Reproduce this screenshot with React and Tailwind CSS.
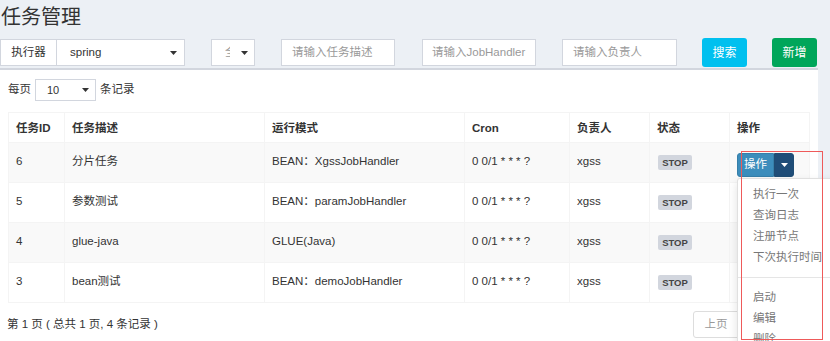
import React from "react";

const rows = [
  { id: 6, desc: "分片任务", mode: "BEAN：XgssJobHandler" },
  { id: 5, desc: "参数测试", mode: "BEAN：paramJobHandler" },
  { id: 4, desc: "glue-java", mode: "GLUE(Java)" },
  { id: 3, desc: "bean测试", mode: "BEAN：demoJobHandler" },
];

const menuTop = ["执行一次", "查询日志", "注册节点", "下次执行时间"];
const menuBottom = ["启动", "编辑", "删除"];

function Caret({ className }) {
  return (
    <svg width="7" height="4" viewBox="0 0 7 4" className={className}>
      <path d="M0 0h7L3.5 4z" fill="currentColor" />
    </svg>
  );
}

export default function App() {
  return (
    <div className="relative w-[830px] h-[341px] overflow-hidden bg-[#ecf0f5] text-[#333] font-['Liberation_Sans','Noto_Sans_CJK_SC',sans-serif]">
      {/* header */}
      <h1 className="h-[38px] pl-[1px] pt-[4px] text-[20px] leading-[26px] font-normal">任务管理</h1>

      {/* filters */}
      <div className="flex items-center h-[29px] text-[11.5px] whitespace-nowrap">
        <div className="flex h-[27px]">
          <div className="w-[57px] flex items-center justify-center bg-white border border-[#d2d6de]">执行器</div>
          <div className="w-[128px] flex items-center justify-between pl-[13px] pr-[7px] bg-white border border-l-0 border-[#d2d6de]">
            <span>spring</span>
            <Caret className="text-[#333]" />
          </div>
        </div>
        <div className="ml-[26px] w-[44px] h-[27px] flex items-center justify-between pl-[13px] pr-[6px] bg-white border border-[#d2d6de]">
          <span className="w-[5px] overflow-hidden text-[#999]">全部</span>
          <Caret className="text-[#333]" />
        </div>
        <div className="ml-[26px] w-[114px] h-[27px] flex items-center px-[10px] bg-white border border-[#d2d6de] text-[#999] overflow-hidden">请输入任务描述</div>
        <div className="ml-[27px] w-[114px] h-[27px] flex items-center pl-[9px] bg-white border border-[#d2d6de] text-[#999] overflow-hidden">请输入JobHandler</div>
        <div className="ml-[26px] w-[115px] h-[27px] flex items-center px-[10px] bg-white border border-[#d2d6de] text-[#999] overflow-hidden">请输入负责人</div>
        <button className="ml-[25px] w-[45px] h-[29px] rounded-[3px] bg-[#00c0ef] text-white text-[12px]">搜索</button>
        <button className="ml-[25px] w-[45px] h-[29px] rounded-[3px] bg-[#00a65a] text-white text-[12px]">新增</button>
      </div>

      {/* box */}
      <div className="mt-[1px] w-[818px] h-[300px] bg-white border-t-2 border-[#d2d6de] text-[11.5px]">
        <div className="flex items-center h-[22px] mt-[9px] pl-[8px]">
          <span>每页</span>
          <div className="ml-[4px] w-[61px] h-[22px] flex items-center justify-between pl-[11px] pr-[6px] border border-[#d2d6de]">
            <span className="text-[11px]">10</span>
            <Caret className="text-[#333]" />
          </div>
          <span className="ml-[4px]">条记录</span>
        </div>

        <table className="ml-[8px] mt-[11px] w-[801px] table-fixed border-collapse">
          <colgroup>
            <col className="w-[56px]" />
            <col className="w-[200px]" />
            <col className="w-[200px]" />
            <col className="w-[105px]" />
            <col className="w-[80px]" />
            <col className="w-[80px]" />
            <col className="w-[80px]" />
          </colgroup>
          <thead>
            <tr className="h-[30px]">
              {["任务ID", "任务描述", "运行模式", "Cron", "负责人", "状态", "操作"].map((h) => (
                <th key={h} className="border border-[#f4f4f4] px-[7px] text-left font-bold leading-[14px]">{h}</th>
              ))}
            </tr>
          </thead>
          <tbody>
            {rows.map((r, i) => (
              <tr key={r.id} className={i % 2 === 0 ? "h-[40px] bg-[#f9f9f9]" : "h-[40px] bg-white"}>
                <td className="border border-[#f4f4f4] px-[7px] pt-[8px] align-top leading-[20px]">{r.id}</td>
                <td className="border border-[#f4f4f4] px-[7px] pt-[8px] align-top leading-[20px]">{r.desc}</td>
                <td className="border border-[#f4f4f4] px-[7px] pt-[8px] align-top leading-[20px]">{r.mode}</td>
                <td className="border border-[#f4f4f4] px-[7px] pt-[8px] align-top leading-[20px]">0 0/1 * * * ?</td>
                <td className="border border-[#f4f4f4] px-[7px] pt-[8px] align-top leading-[20px]">xgss</td>
                <td className="border border-[#f4f4f4] px-[8px] pt-[11px] align-top">
                  <span className="inline-block w-[34px] h-[15px] leading-[15px] text-center rounded-[2px] bg-[#d2d6de] text-[#444] text-[9.5px] font-bold">STOP</span>
                </td>
                <td className="border border-[#f4f4f4] px-[7px] pt-[10px] align-top">
                  {i === 0 && (
                    <div className="inline-flex h-[24px]">
                      <span className="w-[37px] flex items-center justify-center rounded-l-[3px] bg-[#3c8dbc] border border-[#367fa9] text-white text-[11.5px]">操作</span>
                      <span className="w-[20px] flex items-center justify-center rounded-r-[3px] bg-[#1f4d78] border border-[#204d74] text-white">
                        <Caret />
                      </span>
                    </div>
                  )}
                </td>
              </tr>
            ))}
          </tbody>
        </table>

        <div className="flex items-center mt-[8px] h-[27px] pl-[7px] pr-[9px]">
          <span>第 1 页 ( 总共 1 页, 4 条记录 )</span>
          <div className="ml-auto flex h-[27px] text-[11.5px]">
            <span className="w-[46px] flex items-center justify-center border border-[#ddd] rounded-l-[3px] text-[#999]">上页</span>
            <span className="w-[24px] flex items-center justify-center border border-l-0 border-[#ddd] text-[#999]">1</span>
            <span className="w-[46px] flex items-center justify-center border border-l-0 border-[#ddd] rounded-r-[3px] text-[#999]">下页</span>
          </div>
        </div>
      </div>

      {/* open dropdown menu */}
      <div className="absolute left-[737px] top-[178px] w-[110px] py-[5px] bg-white border border-[rgba(0,0,0,0.12)] rounded-[3px] shadow-[0_4px_10px_rgba(0,0,0,0.12)] text-[11.5px] text-[#777]">
        {menuTop.map((m) => (
          <div key={m} className="h-[21px] leading-[21px] pl-[15px] whitespace-nowrap">{m}</div>
        ))}
        <div className="my-[9px] h-px bg-[#e5e5e5]" />
        {menuBottom.map((m) => (
          <div key={m} className="h-[21px] leading-[21px] pl-[15px] whitespace-nowrap">{m}</div>
        ))}
      </div>

      {/* red annotation frame */}
      <div className="absolute left-[741px] top-[151px] w-[82px] h-[189px] border-[1.5px] border-[#ee5a5a]" />
    </div>
  );
}
